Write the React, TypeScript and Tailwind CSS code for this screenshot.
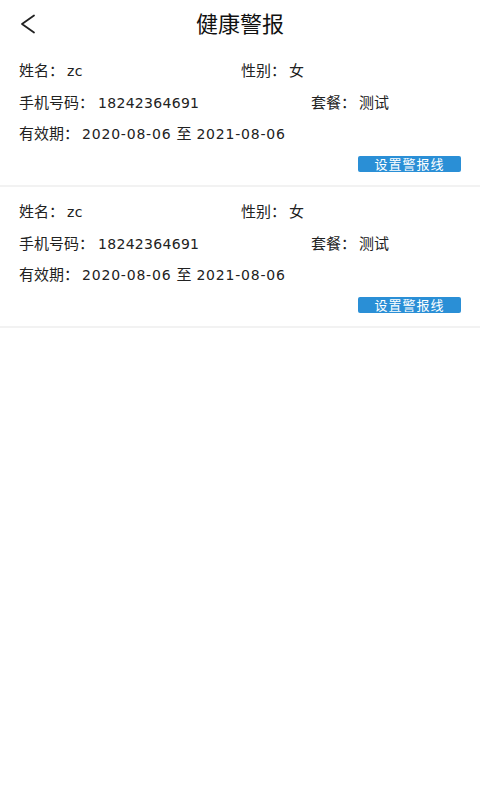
const cards = [
  { name: 'zc', sex: '女', phone: '18242364691', plan: '测试', from: '2020-08-06', to: '2021-08-06' },
  { name: 'zc', sex: '女', phone: '18242364691', plan: '测试', from: '2020-08-06', to: '2021-08-06' },
];

// latin/digit parts use a wider face, like the phone's system font
function Num({ children, className = '' }: { children: React.ReactNode; className?: string }) {
  return <span className={`font-['DejaVu_Sans'] text-[14px] ${className}`}>{children}</span>;
}

function Card({ c }: { c: (typeof cards)[number] }) {
  return (
    <div className="border-b-2 border-[#f2f2f2] h-[141px] pl-[19px] pr-[19px] pt-[14px] text-[15px] leading-[20px] text-[#222]">
      <div className="flex h-[20px]">
        <div className="w-[222px]">
          姓名：<Num className="ml-[3px] tracking-[0.3px]">{c.name}</Num>
        </div>
        <div>
          性别：<span className="ml-[3px]">{c.sex}</span>
        </div>
      </div>
      <div className="flex mt-[12px] h-[20px]">
        <div className="w-[292px]">
          手机号码：<Num className="ml-[4px] tracking-[0.3px]">{c.phone}</Num>
        </div>
        <div>
          套餐：<span className="ml-[3px]">{c.plan}</span>
        </div>
      </div>
      <div className="mt-[11px] h-[20px]">
        有效期：<Num className="ml-[3px] tracking-[0.8px]">{c.from}</Num>
        <span className="mx-[5px]">至</span>
        <Num className="tracking-[0.8px]">{c.to}</Num>
      </div>
      <div className="flex justify-end mt-[13px]">
        <button className="w-[103px] h-[16px] rounded-[2px] bg-[#2a8fd6] text-white text-[13px] leading-[16px] tracking-[1px]">
          设置警报线
        </button>
      </div>
    </div>
  );
}

export default function App() {
  return (
    <div className="w-[480px] h-[800px] bg-white" style={{ fontFamily: '"Noto Sans CJK SC", "Noto Sans", sans-serif' }}>
      <header className="relative h-[46px] flex items-center justify-center">
        <svg className="absolute left-[19px] top-[14px]" width="18" height="20" viewBox="0 0 18 20" fill="none">
          <path d="M15 1.5 L3 10 L15 18.5" stroke="#222" strokeWidth="1.8" strokeLinecap="round" strokeLinejoin="round" />
        </svg>
        <h1 className="text-[22px] text-[#111] -mt-[2px]">健康警报</h1>
      </header>
      {cards.map((c, i) => (
        <Card key={i} c={c} />
      ))}
    </div>
  );
}
